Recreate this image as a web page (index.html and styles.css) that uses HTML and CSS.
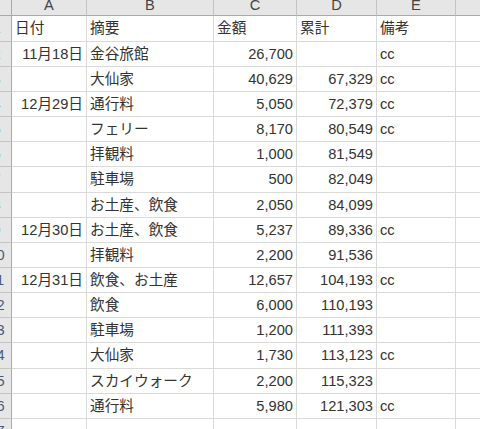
FILE: index.html
```html
<!DOCTYPE html>
<html lang="ja">
<head>
<meta charset="utf-8">
<link rel="stylesheet" href="styles.css">
</head>
<body>
<div class="viewport">
<div class="sheet">
  <div class="h corner"></div><div class="h">A</div><div class="h">B</div><div class="h">C</div><div class="h">D</div><div class="h">E</div><div class="h"></div>

  <div class="rh">1</div><div class="c">日付</div><div class="c">摘要</div><div class="c">金額</div><div class="c">累計</div><div class="c">備考</div><div class="c"></div>
  <div class="rh">2</div><div class="c r">11月18日</div><div class="c">金谷旅館</div><div class="c r">26,700</div><div class="c r"></div><div class="c">cc</div><div class="c"></div>
  <div class="rh">3</div><div class="c r"></div><div class="c">大仙家</div><div class="c r">40,629</div><div class="c r">67,329</div><div class="c">cc</div><div class="c"></div>
  <div class="rh">4</div><div class="c r">12月29日</div><div class="c">通行料</div><div class="c r">5,050</div><div class="c r">72,379</div><div class="c">cc</div><div class="c"></div>
  <div class="rh">5</div><div class="c r"></div><div class="c">フェリー</div><div class="c r">8,170</div><div class="c r">80,549</div><div class="c">cc</div><div class="c"></div>
  <div class="rh">6</div><div class="c r"></div><div class="c">拝観料</div><div class="c r">1,000</div><div class="c r">81,549</div><div class="c"></div><div class="c"></div>
  <div class="rh">7</div><div class="c r"></div><div class="c">駐車場</div><div class="c r">500</div><div class="c r">82,049</div><div class="c"></div><div class="c"></div>
  <div class="rh">8</div><div class="c r"></div><div class="c">お土産、飲食</div><div class="c r">2,050</div><div class="c r">84,099</div><div class="c"></div><div class="c"></div>
  <div class="rh">9</div><div class="c r">12月30日</div><div class="c">お土産、飲食</div><div class="c r">5,237</div><div class="c r">89,336</div><div class="c">cc</div><div class="c"></div>
  <div class="rh">10</div><div class="c r"></div><div class="c">拝観料</div><div class="c r">2,200</div><div class="c r">91,536</div><div class="c"></div><div class="c"></div>
  <div class="rh">11</div><div class="c r">12月31日</div><div class="c">飲食、お土産</div><div class="c r">12,657</div><div class="c r">104,193</div><div class="c">cc</div><div class="c"></div>
  <div class="rh">12</div><div class="c r"></div><div class="c">飲食</div><div class="c r">6,000</div><div class="c r">110,193</div><div class="c"></div><div class="c"></div>
  <div class="rh">13</div><div class="c r"></div><div class="c">駐車場</div><div class="c r">1,200</div><div class="c r">111,393</div><div class="c"></div><div class="c"></div>
  <div class="rh">14</div><div class="c r"></div><div class="c">大仙家</div><div class="c r">1,730</div><div class="c r">113,123</div><div class="c">cc</div><div class="c"></div>
  <div class="rh">15</div><div class="c r"></div><div class="c">スカイウォーク</div><div class="c r">2,200</div><div class="c r">115,323</div><div class="c"></div><div class="c"></div>
  <div class="rh">16</div><div class="c r"></div><div class="c">通行料</div><div class="c r">5,980</div><div class="c r">121,303</div><div class="c">cc</div><div class="c"></div>
  <div class="rh">17</div><div class="c r"></div><div class="c"></div><div class="c r"></div><div class="c r"></div><div class="c"></div><div class="c"></div>
</div>
</div>
</body>
</html>
```
FILE: styles.css
```css
html, body {
  margin: 0;
  padding: 0;
  background: #ffffff;
}

.viewport {
  width: 480px;
  height: 429px;
  overflow: hidden;
}

.sheet {
  display: grid;
  grid-template-columns: 26px 75px 127px 83px 80px 79px 100px;
  grid-template-rows: 21px 26px 25px 25px 25px 25px 25px 26px 25px 25px 25px 25px 25px 25px 26px 25px 25px;
  margin: -5px 0 0 -14px;
  width: 490px;
  font-family: "Liberation Sans", "Noto Sans CJK JP", sans-serif;
  font-size: 14.67px;
  color: #333333;
}

.sheet > div {
  box-sizing: border-box;
  white-space: nowrap;
  overflow: hidden;
}

.h {
  background: #e6e6e6;
  border-right: 1px solid #c4c4c4;
  border-bottom: 1px solid #a9a9a9;
  text-align: center;
  line-height: 20px;
  color: #444444;
}

.corner {
  border-right-color: #a9a9a9;
}

.rh {
  background: #e6e6e6;
  border-right: 1px solid #a9a9a9;
  border-bottom: 1px solid #c4c4c4;
  text-align: center;
  padding-right: 4px;
  line-height: 24px;
  color: #4a5a7a;
}

.c {
  border-right: 1px solid #dadada;
  border-bottom: 1px solid #dadada;
  padding: 0 3px;
  line-height: 24px;
}

.r {
  text-align: right;
}
```
